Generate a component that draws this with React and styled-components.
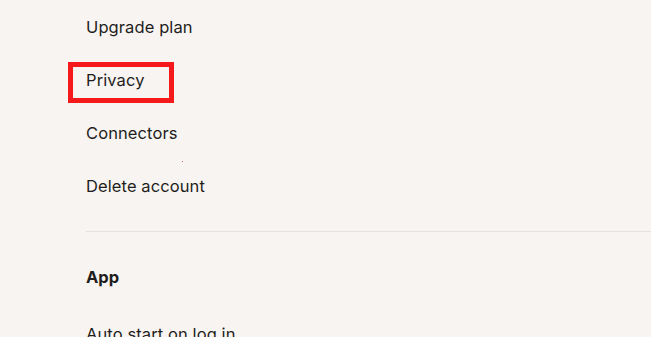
import styled, { createGlobalStyle } from "styled-components"

const GlobalStyle = createGlobalStyle`
    html, body {
        margin: 0;
        padding: 0;
        background-color: #f8f4f1;
        overflow: hidden;
    }
    body {
        font-family: Inter, "Noto Sans", sans-serif;
        color: #1f1e1d;
    }
`

const Page = styled.div`
    position: relative;
    width: 651px;
    height: 337px;
    overflow: hidden;
    padding-left: 86px;
    box-sizing: border-box;
`

const Menu = styled.div`
    display: flex;
    flex-direction: column;
`

const Item = styled.div`
    height: 53px;
    margin-top: ${p => p.$gap || 0}px;
    display: flex;
    align-items: center;
    font-size: 16.5px;
    letter-spacing: 0.1px;
`

const Divider = styled.hr`
    border: none;
    border-top: 1px solid #e6e1de;
    margin: 19px 0 0 0;
`

const SectionTitle = styled.div`
    height: 53px;
    margin-top: 18px;
    display: flex;
    align-items: center;
    font-size: 16.5px;
    font-weight: 700;
`

const Highlight = styled.div`
    position: absolute;
    left: 68px;
    top: 62px;
    width: 106px;
    height: 41px;
    border: 5px solid #f5191b;
    box-sizing: border-box;
`

const Speck = styled.div`
    position: absolute;
    left: 182px;
    top: 161px;
    width: 1px;
    height: 1px;
    background-color: #c86070;
`

const App = () => {
    return (
        <>
            <GlobalStyle />
            <Page>
                <Menu>
                    <Item>Upgrade plan</Item>
                    <Item>Privacy</Item>
                    <Item>Connectors</Item>
                    <Item>Delete account</Item>
                </Menu>
                <Divider />
                <SectionTitle>App</SectionTitle>
                <Item $gap={4}>Auto start on log in</Item>
                <Highlight />
                <Speck />
            </Page>
        </>
    )
}

export default App
